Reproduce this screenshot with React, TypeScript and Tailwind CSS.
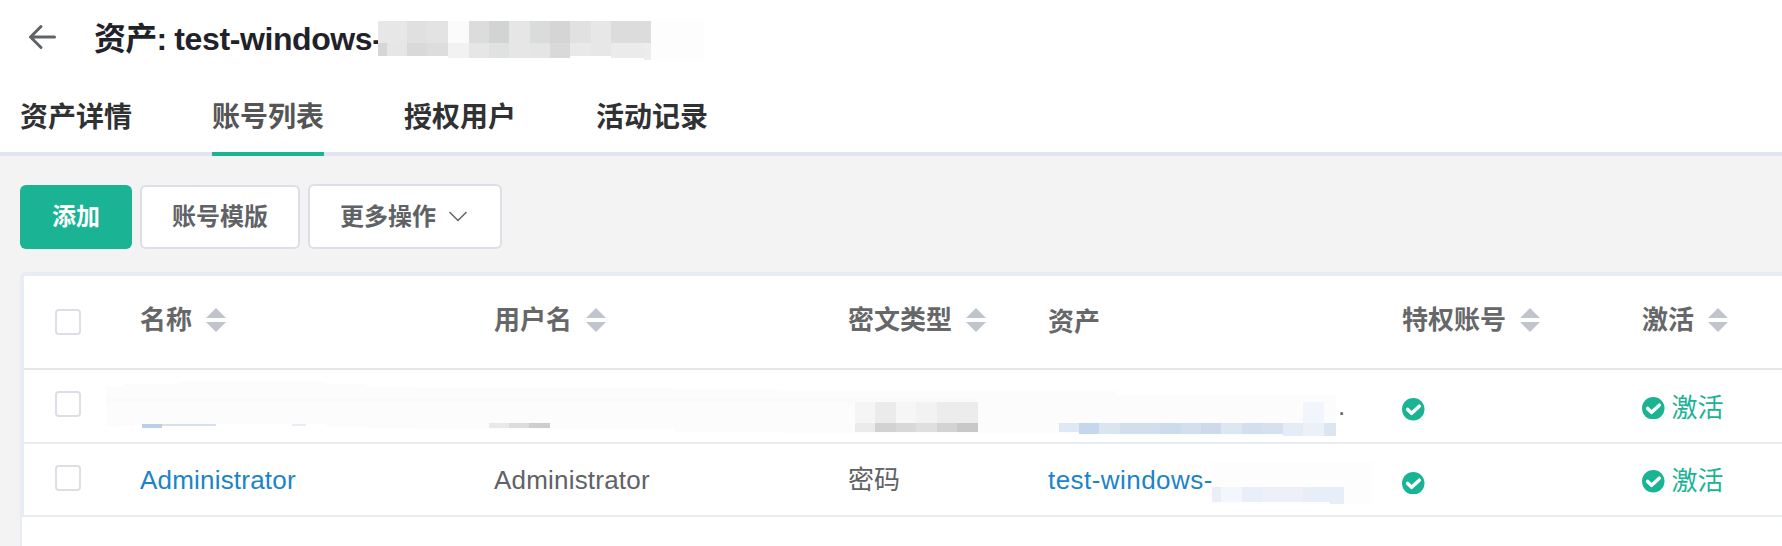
type Cell = [x: number, y: number, w: number, h: number, fill: string];

const tabs = ['资产详情', '账号列表', '授权用户', '活动记录'];
const activeTab = '账号列表';

const columns = [
  { label: '名称', width: 'w-[354px]', sortable: true },
  { label: '用户名', width: 'w-[354px]', sortable: true },
  { label: '密文类型', width: 'w-[200px]', sortable: true },
  { label: '资产', width: 'w-[354px]', sortable: false },
  { label: '特权账号', width: 'w-[240px]', sortable: true },
  { label: '激活', width: 'w-[140px]', sortable: true },
];

// masked part of the asset name in the title
const titleMask: Cell[] = [
  [0, 0, 29, 35, '#e7e7e7'],
  [0, 22, 9, 13, '#d6d6d6'],
  [9, 22, 20, 13, '#e4e7e6'],
  [29, 0, 20, 22, '#e0e0e0'],
  [49, 0, 21, 22, '#e3e3e3'],
  [29, 22, 20, 13, '#d9d9d9'],
  [49, 22, 21, 13, '#dddddd'],
  [70, 0, 21, 22, '#fbfbfb'],
  [70, 22, 21, 15, '#f2f2f2'],
  [91, 0, 20, 22, '#dcdcdc'],
  [111, 0, 20, 22, '#d1d4d3'],
  [91, 22, 20, 15, '#e6e6e6'],
  [111, 22, 20, 15, '#dfe2e1'],
  [131, 0, 21, 37, '#e6e6e6'],
  [152, 0, 20, 22, '#dadcdb'],
  [152, 22, 20, 15, '#e5e5e5'],
  [172, 0, 20, 22, '#d5d5d5'],
  [172, 22, 20, 15, '#d9d9d9'],
  [192, 0, 21, 22, '#e1e1e1'],
  [192, 22, 21, 13, '#e9e9e9'],
  [213, 0, 20, 35, '#e7e7e7'],
  [233, 0, 40, 22, '#dcdcdc'],
  [233, 22, 33, 15, '#ebebeb'],
  [266, 22, 7, 17, '#ededed'],
  [273, 0, 53, 39, '#fdfdfd'],
];

// fully masked first row
const rowMask: Cell[] = [
  [0, 4, 18, 40, '#fcfcfc'],
  [18, 2, 54, 41, '#fcfcfc'],
  [72, 0, 148, 42, '#fcfcfc'],
  [220, 2, 40, 42, '#fcfcfc'],
  [260, 4, 48, 42, '#fcfcfc'],
  [308, 6, 260, 41, '#fcfcfc'],
  [568, 8, 108, 42, '#fcfcfc'],
  [676, 9, 335, 42, '#fcfcfc'],
  [1011, 12, 219, 41, '#fcfcfc'],
  [0, 16, 870, 4, '#fafafa'],
  [36, 42, 74, 2, '#d5e1ee'],
  [36, 42, 20, 4, '#b9d0e6'],
  [186, 42, 14, 2, '#e6edf5'],
  [383, 41, 20, 5, '#e8eaea'],
  [403, 41, 20, 5, '#dcdcdc'],
  [423, 41, 21, 5, '#cecece'],
  [749, 20, 20, 21, '#f5f5f5'],
  [769, 20, 21, 21, '#ebebeb'],
  [790, 20, 20, 21, '#f6f6f6'],
  [810, 20, 21, 21, '#f2f2f2'],
  [831, 20, 41, 21, '#ececec'],
  [749, 41, 20, 9, '#ebebeb'],
  [769, 41, 21, 9, '#d2d2d2'],
  [790, 41, 20, 9, '#d8d8d8'],
  [810, 41, 21, 9, '#dfdfdf'],
  [831, 41, 20, 9, '#d3d3d3'],
  [851, 41, 21, 9, '#c8c8c8'],
  [953, 41, 20, 9, '#e0e8f3'],
  [973, 41, 20, 11, '#c4d7ec'],
  [993, 41, 21, 11, '#dbe5f1'],
  [1014, 41, 40, 11, '#d0deed'],
  [1054, 41, 21, 11, '#cddced'],
  [1075, 41, 20, 11, '#d1dfef'],
  [1095, 41, 20, 11, '#ccdaeb'],
  [1115, 41, 21, 11, '#dce7f1'],
  [1136, 41, 20, 11, '#d2dfee'],
  [1156, 41, 21, 11, '#d6e0f0'],
  [1177, 41, 20, 13, '#e4ecf5'],
  [1197, 41, 21, 13, '#eaf1f7'],
  [1218, 41, 12, 13, '#dbe6f1'],
  [1197, 20, 21, 21, '#f2f5fb'],
];

const assetMask: Cell[] = [
  [0, 0, 160, 42, '#fdfdfe'],
  [0, 25, 9, 15, '#e9eef7'],
  [9, 25, 21, 15, '#f3f6fb'],
  [30, 25, 20, 15, '#e9eff8'],
  [50, 25, 41, 15, '#edf1f7'],
  [91, 25, 27, 15, '#e8eef7'],
  [118, 25, 14, 17, '#e8eef7'],
];

interface MosaicProps {
  cells: Cell[];
  width: number;
  height: number;
  className: string;
}

function Mosaic({ cells, width, height, className }: MosaicProps) {
  return (
    <svg width={width} height={height} shapeRendering="crispEdges" className={`absolute ${className}`}>
      {cells.map(([x, y, w, h, fill], i) => (
        <rect key={i} x={x} y={y} width={w} height={h} fill={fill} />
      ))}
    </svg>
  );
}

function Checkbox() {
  return <span className="block h-[26px] w-[26px] rounded-[4px] border-2 border-[#dcdfe6] bg-white" />;
}

function SortCaret() {
  return (
    <svg width="20" height="24" viewBox="0 0 20 24" fill="#c0c4cc" className="mb-px ml-3.5">
      <path d="M10 0 20 10H0zM10 24 0 14h20z" />
    </svg>
  );
}

function CheckCircle() {
  return (
    <svg width="22.500" height="22.500" viewBox="0 0 22 22" className="shrink-0">
      <circle cx="11" cy="11" r="11" fill="#1ab394" />
      <path d="M5.500 11.200 9.400 15l7.500-7" fill="none" stroke="#fff" strokeWidth="3.400" strokeLinecap="round" strokeLinejoin="round" />
    </svg>
  );
}

function StatusCells() {
  return (
    <>
      <div className="w-[240px] pt-[7px]">
        <CheckCircle />
      </div>
      <div className="flex items-center gap-[7px] pt-1 text-[#1ab394]">
        <CheckCircle />
        激活
      </div>
    </>
  );
}

export default function App() {
  return (
    <div className="h-[546px] w-[1782px] overflow-hidden bg-[#f3f3f3] font-['Liberation_Sans','Noto_Sans_CJK_SC',sans-serif]">
      <header className="h-[156px] border-b-4 border-[#e1e5ed] bg-white">
        <div className="relative flex h-[78px] items-center pl-7">
          <svg width="30" height="26" viewBox="0 0 30 26" fill="none" stroke="#606266" strokeWidth="3" strokeLinecap="round" strokeLinejoin="round" className="mb-1">
            <path d="M26.500 13H2.500M13 2.500 2.500 13 13 23.500" />
          </svg>
          <h1 className="ml-9 text-[32px] font-bold tracking-[-0.4px] whitespace-nowrap text-[#1f2329]">
            <span className="tracking-[-0.8px]">资产: </span>test-windows-
          </h1>
          <Mosaic cells={titleMask} width={326} height={39} className="top-[21px] left-[378px]" />
        </div>
        <nav className="flex h-[78px] gap-20 pl-5">
          {tabs.map((tab) => (
            <a
              key={tab}
              className={`flex h-[78px] w-28 items-center justify-center border-b-4 pt-[5px] text-[28px] font-bold whitespace-nowrap ${
                tab === activeTab ? 'border-[#1ab394] text-[#555]' : 'border-transparent text-[#303133]'
              }`}
            >
              {tab}
            </a>
          ))}
        </nav>
      </header>

      <div className="flex items-end gap-2 pt-7 pl-5 text-2xl font-bold text-[#606266]">
        <button className="h-16 w-28 rounded-md bg-[#1ab394] text-white">添加</button>
        <button className="h-16 w-40 rounded-md border-2 border-[#dcdfe6] bg-white">账号模版</button>
        <button className="flex h-[65px] w-[194px] items-center rounded-md border-2 border-[#dcdfe6] bg-white pl-[30px]">
          更多操作
          <svg width="18" height="11" viewBox="0 0 18 11" fill="none" stroke="#606266" strokeWidth="1.500" className="ml-[13px]">
            <path d="M0.500 1 9 9.500 17.500 1" />
          </svg>
        </button>
      </div>

      <div className="mt-[23px] ml-5 h-[274px] rounded-tl-md border-t-4 border-l-2 border-[#e8ecf5] bg-white text-[26px] text-[#606266]">
        <div className="border-l-2 border-[#e8ecf5]">
          <div className="flex h-[94px] items-center border-b-2 border-[#e6e6e6] pl-[31px] font-bold text-[#666769]">
            <div className="w-[85px]">
              <Checkbox />
            </div>
            {columns.map((col) => (
              <div
                key={col.label}
                className={`flex shrink-0 items-center whitespace-nowrap ${col.sortable ? 'pb-[3px]' : ''} ${col.width}`}
              >
                {col.label}
                {col.sortable && <SortCaret />}
              </div>
            ))}
          </div>

          <div className="relative flex h-[74px] items-center border-b-2 border-[#e9eef4] pl-[31px]">
            <div className="w-[85px] pb-1">
              <Checkbox />
            </div>
            <div className="w-[908px]" />
            <div className="w-[354px] pl-[290px]">.</div>
            <StatusCells />
            <Mosaic cells={rowMask} width={1230} height={56} className="top-3 left-[82px]" />
          </div>

          <div className="relative flex h-[73px] items-center border-b-2 border-[#e9eef4] pl-[31px]">
            <div className="w-[85px] pb-1">
              <Checkbox />
            </div>
            <div className="w-[354px] pt-0.5 tracking-[0.2px] text-[#1c84c6]">Administrator</div>
            <div className="w-[354px] pt-0.5 tracking-[0.2px]">Administrator</div>
            <div className="w-[200px] pt-px">密码</div>
            <div className="w-[354px] pt-0.5 tracking-[0.45px] text-[#1c84c6]">test-windows-</div>
            <StatusCells />
            <Mosaic cells={assetMask} width={160} height={42} className="top-[18px] left-[1188px]" />
          </div>
        </div>
      </div>
    </div>
  );
}
